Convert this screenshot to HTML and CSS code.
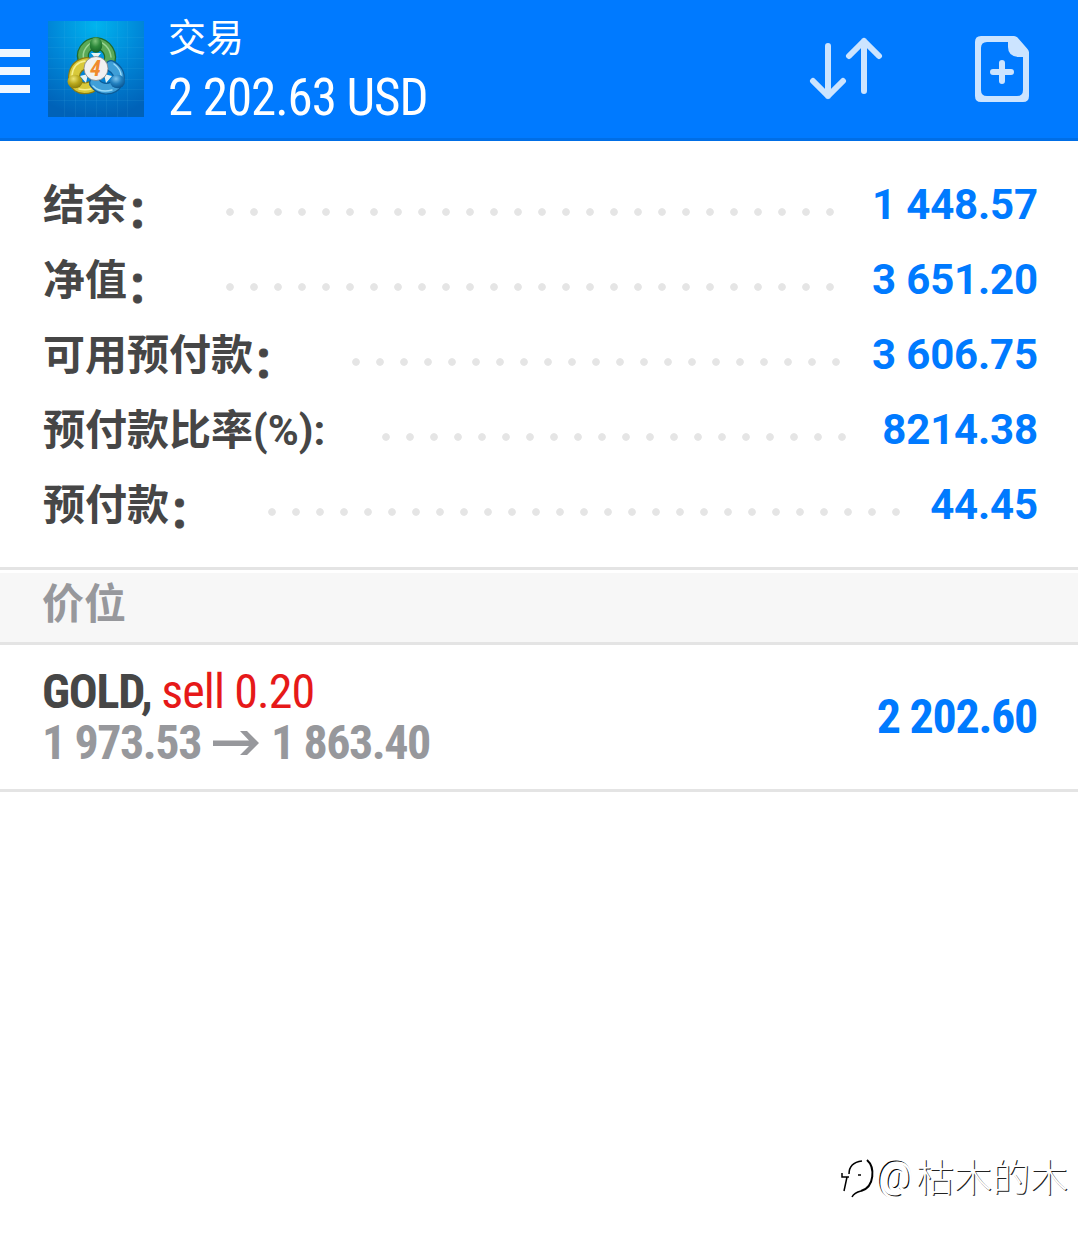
FILE: index.html
```html
<!DOCTYPE html>
<html lang="zh-CN">
<head>
    <meta charset="UTF-8">
    <meta name="viewport" content="width=device-width, initial-scale=1.0">
    <title>交易</title>
    <link rel="stylesheet" href="styles.css">
</head>
<body>
    <header class="topbar">
        <div class="menu"><span></span><span></span><span></span></div>
        <svg class="logo" width="96" height="96" viewBox="0 0 96 96">
            <defs>
                <radialGradient id="bg" cx="50%" cy="5%" r="95%">
                    <stop offset="0" stop-color="#00b4ee"/>
                    <stop offset="0.5" stop-color="#0087d8"/>
                    <stop offset="1" stop-color="#0062b8"/>
                </radialGradient>
                <radialGradient id="green" cx="45%" cy="25%" r="75%">
                    <stop offset="0" stop-color="#7fc47c"/>
                    <stop offset="0.5" stop-color="#2f8a3c"/>
                    <stop offset="1" stop-color="#146226"/>
                </radialGradient>
                <radialGradient id="yellow" cx="40%" cy="30%" r="75%">
                    <stop offset="0" stop-color="#eee572"/>
                    <stop offset="0.5" stop-color="#b9a81c"/>
                    <stop offset="1" stop-color="#85780a"/>
                </radialGradient>
                <radialGradient id="blue" cx="40%" cy="30%" r="75%">
                    <stop offset="0" stop-color="#7cc4ee"/>
                    <stop offset="0.5" stop-color="#2280bf"/>
                    <stop offset="1" stop-color="#07508c"/>
                </radialGradient>
            </defs>
            <rect width="96" height="96" fill="url(#bg)"/>
            <path d="M16.500 0v96M27.500 0v96M37.500 0v96M48.500 0v96M58.500 0v96M69.500 0v96M79.500 0v96M0 16.500h96M0 26.500h96M0 37.500h96M0 47.500h96M0 58.500h96M0 68.500h96M0 79.500h96" stroke="#5cc4f0" stroke-opacity="0.1"/>
            <g fill="none" stroke-linecap="round">
                <path d="M37 42C31 31 39 23 48 22c10 1 18 11 12 22" stroke="#1f6b2c" stroke-width="12"/>
                <path d="M37 42C31 31 39 23 48 22c10 1 18 11 12 22" stroke="#5aa957" stroke-width="9.500"/>
                <path d="M36 39C33 30 40 22 48 20c8 1 14 7 15 16" stroke="#9bd695" stroke-width="1.500"/>
                <path d="M43 66C32 70 25 64 26 55c1-8 6-12 13-13" stroke="#8a7b10" stroke-width="12"/>
                <path d="M43 66C32 70 25 64 26 55c1-8 6-12 13-13" stroke="#d8c93a" stroke-width="9.500"/>
                <path d="M24 54c1-8 6-13 13-14M31 68c4 1 8 1 12 0" stroke="#f6f090" stroke-width="1.500"/>
                <path d="M47 62c6 8 18 7 22 0 4-7 1-13-6-17" stroke="#0d5c98" stroke-width="12"/>
                <path d="M47 62c6 8 18 7 22 0 4-7 1-13-6-17" stroke="#3f9fd8" stroke-width="9.500"/>
                <path d="M45 65c5 5 12 6 19 4M66 43c4 3 7 7 7 12" stroke="#9bdcfa" stroke-width="1.500"/>
            </g>
            <path d="M43 32h10l-5 6zM32 55l8-2-2 9zM56 53l8 2-6 7z" fill="#e8f4f4"/>
            <ellipse cx="48" cy="24" rx="6.300" ry="7.800" fill="url(#green)"/>
            <ellipse cx="27" cy="60.500" rx="7.500" ry="6.800" fill="url(#yellow)"/>
            <ellipse cx="69.500" cy="60.500" rx="7.500" ry="6.800" fill="url(#blue)"/>
            <circle cx="48" cy="47.500" r="12" fill="#f1f1f1" stroke="#777" stroke-width="0.700"/>
            <text class="logo-number" x="47.500" y="55" text-anchor="middle">4</text>
        </svg>
        <div class="account">
            <div class="title">交易</div>
            <div class="profit">2 202.63 USD</div>
        </div>
        <svg class="icon-sort" width="74" height="64" viewBox="0 0 74 64">
            <path d="M19 9v50M4 44l15 15 15-15M55 54V4M40 19L55 4l15 15" fill="none" stroke="#cce4ff" stroke-width="6" stroke-linecap="round" stroke-linejoin="round"/>
        </svg>
        <svg class="icon-add" width="54" height="66" viewBox="0 0 54 66">
            <path d="M6 0h33q2 0 3.500 1.500L52.500 13q1.500 1.500 1.500 3.500V60q0 6-6 6H6q-6 0-6-6V6q0-6 6-6zM33 6H12q-6 0-6 6v42q0 6 6 6h30q6 0 6-6V21h-5q-10-1-10-10z" fill="#cce4ff" fill-rule="evenodd"/>
            <path d="M27 27v18M18 36h18" stroke="#cce4ff" stroke-width="6" stroke-linecap="round"/>
        </svg>
    </header>

    <section class="summary">
        <div class="row"><span class="label">结余<span class="colon">：</span></span><span class="dots"></span><span class="value">1 448.57</span></div>
        <div class="row"><span class="label">净值<span class="colon">：</span></span><span class="dots"></span><span class="value">3 651.20</span></div>
        <div class="row"><span class="label">可用预付款<span class="colon">：</span></span><span class="dots"></span><span class="value">3 606.75</span></div>
        <div class="row"><span class="label">预付款比率(%):</span><span class="dots"></span><span class="value">8214.38</span></div>
        <div class="row"><span class="label">预付款<span class="colon">：</span></span><span class="dots"></span><span class="value">44.45</span></div>
    </section>

    <h2 class="section-title">价位</h2>

    <div class="position">
        <div>
            <div class="order"><b>GOLD,</b> <span class="sell">sell 0.20</span></div>
            <div class="prices">
                <span>1 973.53</span>
                <svg width="46" height="26" viewBox="0 0 46 26"><path d="M0 10.500h36l-9-9.500h7l12 12-12 12h-7l9-9H0z" fill="#97989c"/></svg>
                <span>1 863.40</span>
            </div>
        </div>
        <div class="result">2 202.60</div>
    </div>

    <div class="watermark">
        <svg width="40" height="44" viewBox="0 0 40 44">
            <path d="M6 35l3-14M4 17v4h7M11 18c0-8 5-12 13-13M20 19h3M14 41c2-4 5-5 9-6" fill="none" stroke="#000" stroke-width="1.500"/>
            <path d="M29 4c8 7 8 27-6 31" fill="none" stroke="#000" stroke-width="2"/>
        </svg>
        <span class="at">@</span><span>枯木的木</span>
    </div>
</body>
</html>
```

FILE: styles.css
```css
* {
    box-sizing: border-box;
}
body {
    margin: 0;
    height: 1241px;
    position: relative;
    background: #fff;
    color: #464646;
    font-family: Roboto, "Noto Sans CJK SC", sans-serif;
    font-size: 42px;
}
.topbar {
    display: flex;
    align-items: flex-start;
    height: 141px;
    background: #007aff;
    border-bottom: 3px solid #006ee6;
    color: #fff;
}
.menu {
    display: flex;
    flex-direction: column;
    gap: 10px;
    width: 30px;
    margin-top: 49px;
}
.menu span {
    height: 8px;
    background: #f0f7ff;
}
.logo {
    margin: 21px 0 0 18px;
}
.logo-number {
    font: italic bold 22px Roboto, sans-serif;
    font-stretch: 85%;
    fill: #f08a2c;
}
.account {
    flex: 1;
    margin-left: 24px;
}
.title {
    margin-top: 13px;
    font-size: 38px;
    line-height: 50px;
}
.profit {
    font-size: 51px;
    font-stretch: 75%;
    letter-spacing: -1.050px;
    line-height: 70px;
    white-space: nowrap;
}
.icon-sort {
    margin: 37px 92px 0 0;
}
.icon-add {
    margin: 36px 49px 0 0;
}
.summary {
    padding: 26px 40px 25px 43px;
    border-bottom: 3px solid #e4e4e4;
}
.row {
    display: flex;
    height: 75px;
    line-height: 75px;
    font-weight: bold;
}
.label {
    padding-top: 1px;
}
.colon {
    position: relative;
    top: 7px;
    -webkit-text-stroke: 1px #464646;
}
.dots {
    flex: 1;
    margin: 0 26px 0 57px;
    background: radial-gradient(circle at 4px 45px, #e5e5e5 3.400px, transparent 4.200px) 0 0 / 24px 75px repeat-x;
}
.value {
    color: #007aff;
    letter-spacing: -0.150px;
}
.section-title {
    height: 72px;
    margin: 3px 0 0;
    padding-left: 42px;
    background: #f7f7f7;
    border-bottom: 3px solid #e4e4e4;
    color: #97989c;
    font-size: 42px;
    line-height: 64px;
}
.position {
    display: flex;
    justify-content: space-between;
    align-items: center;
    height: 147px;
    padding: 0 40px 0 42px;
    border-bottom: 3px solid #e4e4e4;
    font-size: 48px;
    font-stretch: 75%;
    line-height: 51px;
    letter-spacing: -1.300px;
}
.sell {
    color: #e61919;
    letter-spacing: -0.900px;
}
.prices {
    display: flex;
    align-items: center;
    gap: 12px;
    color: #97989c;
    font-weight: bold;
    letter-spacing: -1.450px;
}
.result {
    margin: -2px 1px 0 0;
    color: #007aff;
    font-weight: bold;
}
.watermark {
    position: absolute;
    right: 10px;
    bottom: 38px;
    display: flex;
    align-items: center;
    font-size: 38px;
    font-weight: 300;
    line-height: 50px;
    color: #fff;
    text-shadow: 1px 1px 0 #222;
}
.at {
    width: 38px;
    font-size: 40px;
    font-weight: 400;
    text-shadow: -1px -1px 0 #000;
}
```
